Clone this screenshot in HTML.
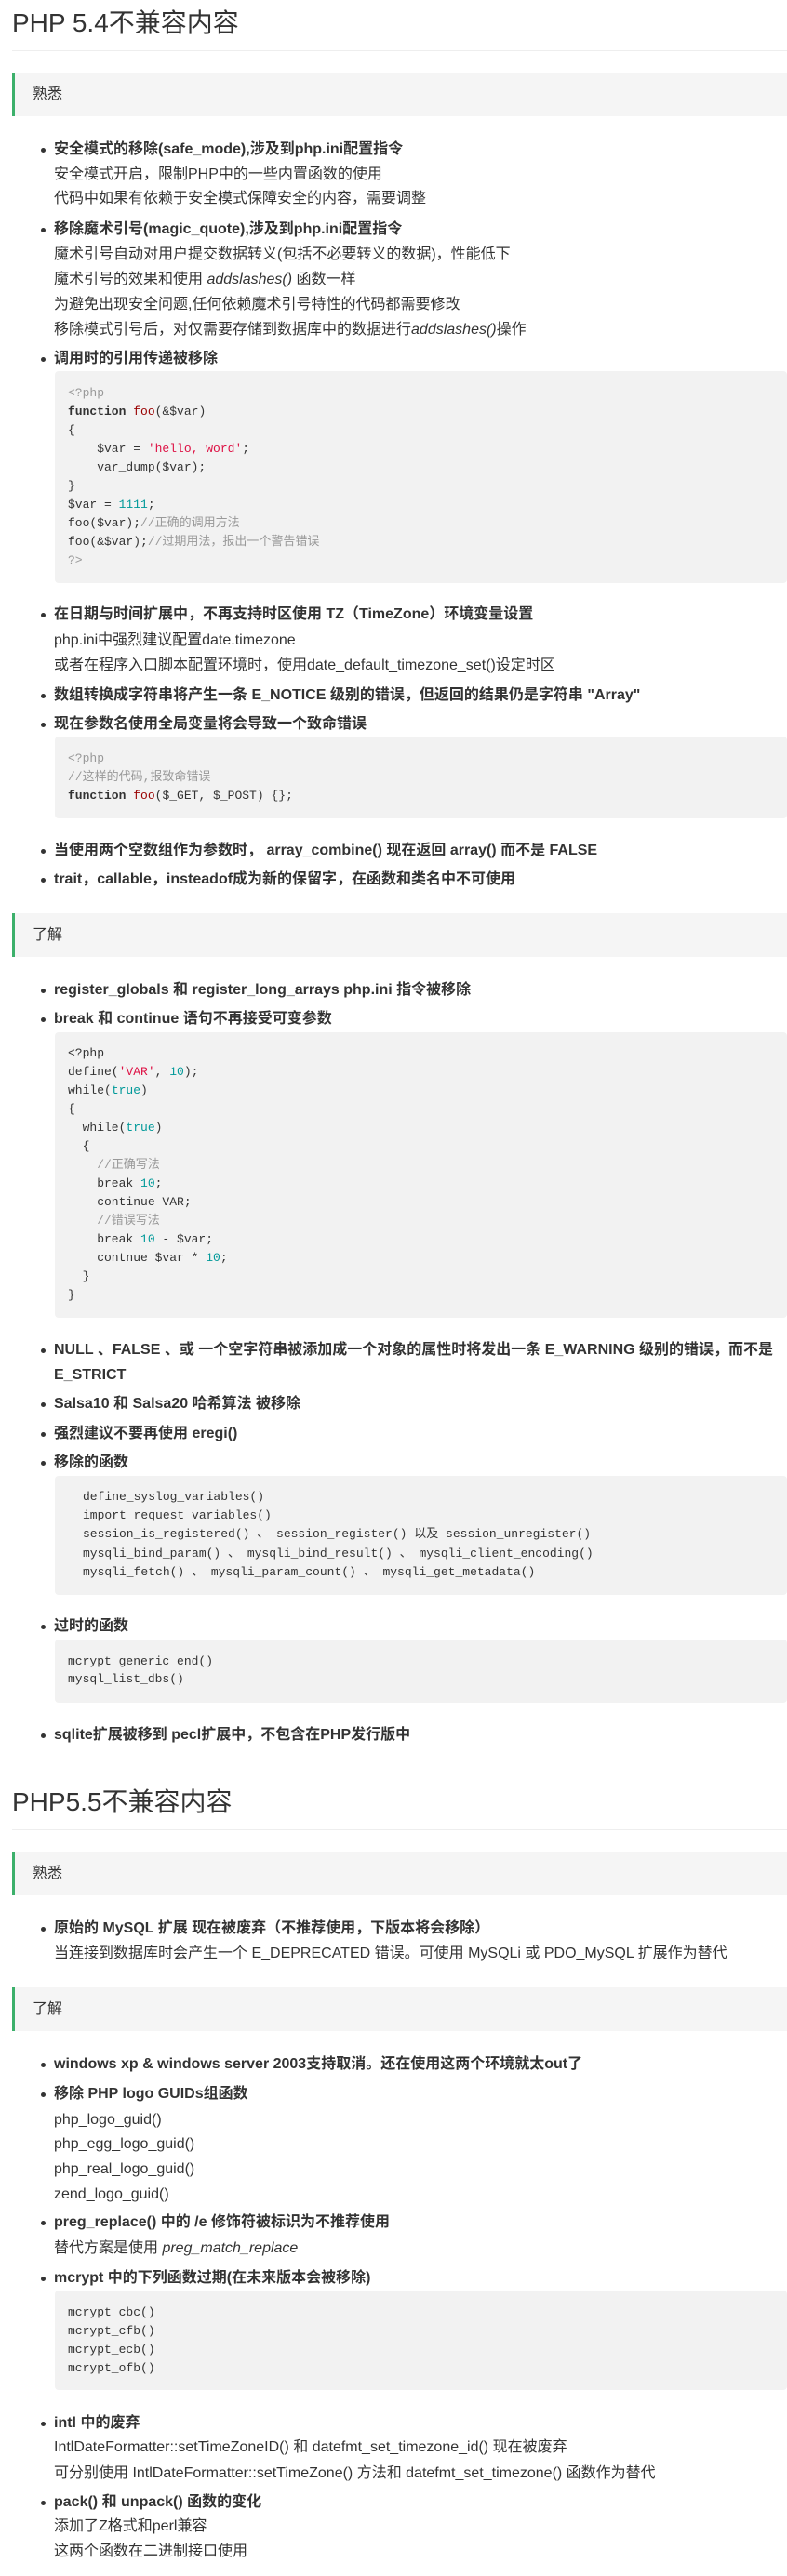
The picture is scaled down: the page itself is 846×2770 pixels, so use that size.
<!DOCTYPE html>
<html><head><meta charset="utf-8"><style>
*{margin:0;padding:0;box-sizing:border-box}
body{width:846px;height:2770px;position:relative;background:#fff;font-family:"Liberation Sans","Noto Sans CJK SC",sans-serif;color:#333;overflow:hidden}
.t{position:absolute;left:58px;font-size:16px;line-height:24px;white-space:nowrap}
.b{font-weight:bold}
.b.d::before{content:"";position:absolute;left:-14px;top:10px;width:5px;height:5px;border-radius:50%;background:#333}
h1{position:absolute;left:13px;font-size:28px;font-weight:normal;line-height:36px;color:#333;white-space:nowrap}
.hr{position:absolute;left:13px;right:0;height:1px;background:#eee}
.bq{position:absolute;left:13px;right:0;background:#f5f5f5;border-left:3px solid #3cb06b}
.bq span{position:absolute;left:19px;top:50%;margin-top:-12px;font-size:16px;line-height:24px;color:#333}
.cb{position:absolute;left:59px;right:0;background:#f2f2f2;border-radius:4px}
.c{position:absolute;left:73px;font-family:"Liberation Mono","Noto Sans CJK SC",monospace;font-size:13px;line-height:20px;white-space:pre;color:#333}
.cm{color:#999}.s{color:#d14}.n{color:#099}.f{color:#900}.k{font-weight:bold}
</style></head><body>

<h1 style="top:7px">PHP 5.4不兼容内容</h1>
<div class="hr" style="top:54px"></div>
<div class="bq" style="top:78px;height:47px"><span>熟悉</span></div>

<div class="t b d" style="top:149px">安全模式的移除(safe_mode),涉及到php.ini配置指令</div>
<div class="t" style="top:176px">安全模式开启，限制PHP中的一些内置函数的使用</div>
<div class="t" style="top:202px">代码中如果有依赖于安全模式保障安全的内容，需要调整</div>
<div class="t b d" style="top:235px">移除魔术引号(magic_quote),涉及到php.ini配置指令</div>
<div class="t" style="top:262px">魔术引号自动对用户提交数据转义(包括不必要转义的数据)，性能低下</div>
<div class="t" style="top:289px">魔术引号的效果和使用 <i>addslashes()</i> 函数一样</div>
<div class="t" style="top:316px">为避免出现安全问题,任何依赖魔术引号特性的代码都需要修改</div>
<div class="t" style="top:343px">移除模式引号后，对仅需要存储到数据库中的数据进行<i>addslashes()</i>操作</div>
<div class="t b d" style="top:374px">调用时的引用传递被移除</div>

<div class="cb" style="top:399px;height:228px"></div>
<div class="c cm" style="top:413px">&lt;?php</div>
<div class="c" style="top:433px"><span class="k">function</span> <span class="f">foo</span>(&amp;$var)</div>
<div class="c" style="top:453px">{</div>
<div class="c" style="top:473px">    $var = <span class="s">'hello, word'</span>;</div>
<div class="c" style="top:493px">    var_dump($var);</div>
<div class="c" style="top:513px">}</div>
<div class="c" style="top:533px">$var = <span class="n">1111</span>;</div>
<div class="c" style="top:553px">foo($var);<span class="cm">//正确的调用方法</span></div>
<div class="c" style="top:573px">foo(&amp;$var);<span class="cm">//过期用法，报出一个警告错误</span></div>
<div class="c cm" style="top:593px">?&gt;</div>

<div class="t b d" style="top:649px">在日期与时间扩展中，不再支持时区使用 TZ（TimeZone）环境变量设置</div>
<div class="t" style="top:677px">php.ini中强烈建议配置date.timezone</div>
<div class="t" style="top:704px">或者在程序入口脚本配置环境时，使用date_default_timezone_set()设定时区</div>
<div class="t b d" style="top:736px">数组转换成字符串将产生一条 E_NOTICE 级别的错误，但返回的结果仍是字符串 "Array"</div>
<div class="t b d" style="top:767px">现在参数名使用全局变量将会导致一个致命错误</div>

<div class="cb" style="top:792px;height:88px"></div>
<div class="c cm" style="top:806px">&lt;?php</div>
<div class="c cm" style="top:826px">//这样的代码,报致命错误</div>
<div class="c" style="top:846px"><span class="k">function</span> <span class="f">foo</span>($_GET, $_POST) {};</div>

<div class="t b d" style="top:903px">当使用两个空数组作为参数时， array_combine() 现在返回 array() 而不是 FALSE</div>
<div class="t b d" style="top:934px">trait，callable，insteadof成为新的保留字，在函数和类名中不可使用</div>

<div class="bq" style="top:982px;height:47px"><span>了解</span></div>

<div class="t b d" style="top:1053px">register_globals 和 register_long_arrays php.ini 指令被移除</div>
<div class="t b d" style="top:1084px">break 和 continue 语句不再接受可变参数</div>

<div class="cb" style="top:1110px;height:307px"></div>
<div class="c" style="top:1123px">&lt;?php</div>
<div class="c" style="top:1143px">define(<span class="s">'VAR'</span>, <span class="n">10</span>);</div>
<div class="c" style="top:1163px">while(<span class="n">true</span>)</div>
<div class="c" style="top:1183px">{</div>
<div class="c" style="top:1203px">  while(<span class="n">true</span>)</div>
<div class="c" style="top:1223px">  {</div>
<div class="c cm" style="top:1243px">    //正确写法</div>
<div class="c" style="top:1263px">    break <span class="n">10</span>;</div>
<div class="c" style="top:1283px">    continue VAR;</div>
<div class="c cm" style="top:1303px">    //错误写法</div>
<div class="c" style="top:1323px">    break <span class="n">10</span> - $var;</div>
<div class="c" style="top:1343px">    contnue $var * <span class="n">10</span>;</div>
<div class="c" style="top:1363px">  }</div>
<div class="c" style="top:1383px">}</div>

<div class="t b d" style="top:1440px">NULL 、FALSE 、或 一个空字符串被添加成一个对象的属性时将发出一条 E_WARNING 级别的错误，而不是</div>
<div class="t b" style="top:1467px">E_STRICT</div>
<div class="t b d" style="top:1498px">Salsa10 和 Salsa20 哈希算法 被移除</div>
<div class="t b d" style="top:1530px">强烈建议不要再使用 eregi()</div>
<div class="t b d" style="top:1561px">移除的函数</div>

<div class="cb" style="top:1587px;height:128px"></div>
<div class="c" style="top:1600px;left:89px">define_syslog_variables()</div>
<div class="c" style="top:1620px;left:89px">import_request_variables()</div>
<div class="c" style="top:1640px;left:89px">session_is_registered() 、 session_register() 以及 session_unregister()</div>
<div class="c" style="top:1661px;left:89px">mysqli_bind_param() 、 mysqli_bind_result() 、 mysqli_client_encoding()</div>
<div class="c" style="top:1681px;left:89px">mysqli_fetch() 、 mysqli_param_count() 、 mysqli_get_metadata()</div>

<div class="t b d" style="top:1737px">过时的函数</div>
<div class="cb" style="top:1763px;height:68px"></div>
<div class="c" style="top:1777px">mcrypt_generic_end()</div>
<div class="c" style="top:1796px">mysql_list_dbs()</div>

<div class="t b d" style="top:1854px">sqlite扩展被移到 pecl扩展中，不包含在PHP发行版中</div>

<h1 style="top:1920px">PHP5.5不兼容内容</h1>
<div class="hr" style="top:1967px"></div>
<div class="bq" style="top:1991px;height:47px"><span>熟悉</span></div>

<div class="t b d" style="top:2062px">原始的 MySQL 扩展 现在被废弃（不推荐使用，下版本将会移除）</div>
<div class="t" style="top:2089px">当连接到数据库时会产生一个 E_DEPRECATED 错误。可使用 MySQLi 或 PDO_MySQL 扩展作为替代</div>

<div class="bq" style="top:2137px;height:47px"><span>了解</span></div>

<div class="t b d" style="top:2208px">windows xp &amp; windows server 2003支持取消。还在使用这两个环境就太out了</div>
<div class="t b d" style="top:2240px">移除 PHP logo GUIDs组函数</div>
<div class="t" style="top:2268px">php_logo_guid()</div>
<div class="t" style="top:2294px">php_egg_logo_guid()</div>
<div class="t" style="top:2321px">php_real_logo_guid()</div>
<div class="t" style="top:2348px">zend_logo_guid()</div>
<div class="t b d" style="top:2378px">preg_replace() 中的 /e 修饰符被标识为不推荐使用</div>
<div class="t" style="top:2406px">替代方案是使用 <i>preg_match_replace</i></div>
<div class="t b d" style="top:2438px">mcrypt 中的下列函数过期(在未来版本会被移除)</div>

<div class="cb" style="top:2463px;height:107px"></div>
<div class="c" style="top:2477px">mcrypt_cbc()</div>
<div class="c" style="top:2497px">mcrypt_cfb()</div>
<div class="c" style="top:2517px">mcrypt_ecb()</div>
<div class="c" style="top:2537px">mcrypt_ofb()</div>

<div class="t b d" style="top:2594px">intl 中的废弃</div>
<div class="t" style="top:2620px">IntlDateFormatter::setTimeZoneID() 和 datefmt_set_timezone_id() 现在被废弃</div>
<div class="t" style="top:2648px">可分别使用 IntlDateFormatter::setTimeZone() 方法和 datefmt_set_timezone() 函数作为替代</div>
<div class="t b d" style="top:2679px">pack() 和 unpack() 函数的变化</div>
<div class="t" style="top:2705px">添加了Z格式和perl兼容</div>
<div class="t" style="top:2732px">这两个函数在二进制接口使用</div>

</body></html>
